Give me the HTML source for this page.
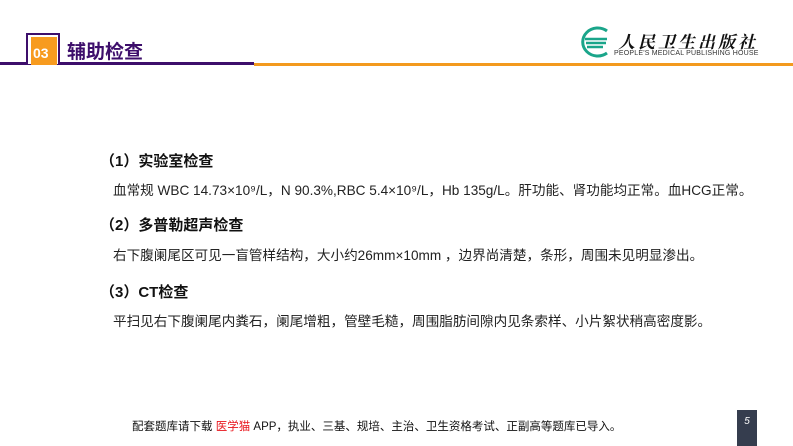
<!DOCTYPE html>
<html><head><meta charset="utf-8"><style>
body{margin:0;width:793px;height:446px;background:#fff;position:relative;overflow:hidden;font-family:"Liberation Sans","Noto Sans CJK SC",sans-serif;}
.a{position:absolute;white-space:nowrap}
.h{font-size:15px;font-weight:bold;color:#111;left:100px}
.p{font-size:13.6px;color:#222;left:113px}
</style></head><body>
<div class="a" style="left:0;top:62px;width:254px;height:3px;background:#3d0e6b"></div>
<div class="a" style="left:254px;top:63px;width:539px;height:3px;background:#f39a1e"></div>
<div class="a" style="left:26px;top:33px;width:30px;height:29px;border:2px solid #3d0e6b;border-bottom:none;background:#fff"></div>
<div class="a" style="left:31px;top:37px;width:26px;height:28px;background:#f79b1f"></div>
<div class="a" style="left:33px;top:45px;font-size:14px;font-weight:bold;color:#fff">03</div>
<div class="a" style="left:67px;top:37px;font-size:19px;font-weight:bold;color:#3d0e6b">辅助检查</div>
<svg class="a" style="left:577px;top:25px" width="38" height="34" viewBox="0 0 38 34"><path d="M30 6 A15 14 0 1 0 30 28" fill="none" stroke="#1aa58a" stroke-width="3"/><path d="M8 14 h22 M9 18 h20 M10 22 h16" stroke="#1aa58a" stroke-width="2.5"/></svg>
<div class="a" style="left:618px;top:28px;font-size:17px;font-weight:bold;font-family:'Noto Serif CJK SC',serif;letter-spacing:3px;color:#111;font-style:italic">人民卫生出版社</div>
<div class="a" style="left:614px;top:50px;font-size:7px;color:#333;letter-spacing:.2px">PEOPLE'S MEDICAL PUBLISHING HOUSE</div>
<div class="a h" style="top:150px">（1）实验室检查</div>
<div class="a p" style="top:179px">血常规 WBC 14.73×10⁹/L，N 90.3%,RBC 5.4×10⁹/L，Hb 135g/L。肝功能、肾功能均正常。血HCG正常。</div>
<div class="a h" style="top:214px">（2）多普勒超声检查</div>
<div class="a p" style="top:244px">右下腹阑尾区可见一盲管样结构，大小约26mm×10mm ，边界尚清楚，条形，周围未见明显渗出。</div>
<div class="a h" style="top:281px">（3）CT检查</div>
<div class="a p" style="top:310px">平扫见右下腹阑尾内粪石，阑尾增粗，管壁毛糙，周围脂肪间隙内见条索样、小片絮状稍高密度影。</div>
<div class="a" style="left:132px;top:418px;font-size:11.5px;color:#111">配套题库请下载 <span style="color:#e8141b">医学猫</span> APP，执业、三基、规培、主治、卫生资格考试、正副高等题库已导入。</div>
<div class="a" style="left:737px;top:410px;width:20px;height:36px;background:#353d4e;color:#fff;font-size:10px;font-style:italic;text-align:center;line-height:24px">5</div>
</body></html>
